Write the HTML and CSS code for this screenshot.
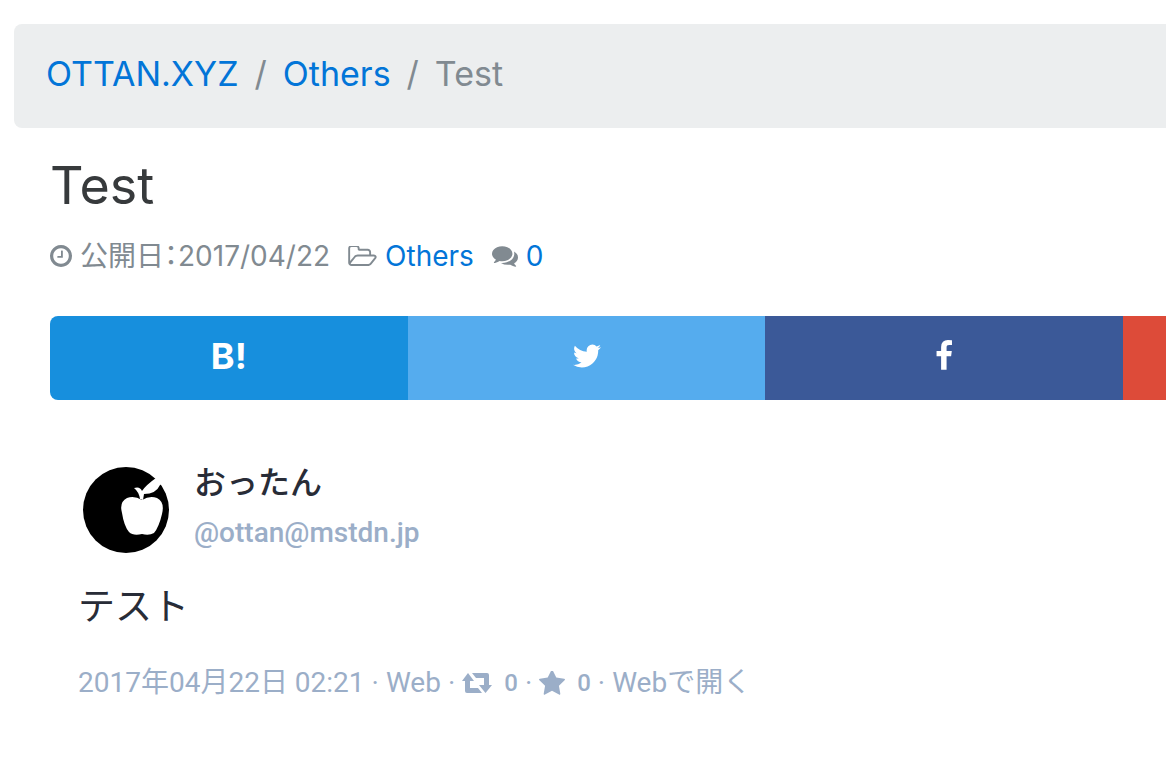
FILE: index.html
```html
<!DOCTYPE html>
<html lang="ja">
<head>
<meta charset="utf-8">
<meta name="viewport" content="width=device-width, initial-scale=1">
<title>Test | OTTAN.XYZ</title>
<link rel="stylesheet" href="styles.css">
</head>
<body>
<div class="page">
  <nav class="breadcrumb" aria-label="breadcrumb">
    <a href="#">OTTAN.XYZ</a>
    <span class="divider">/</span>
    <a href="#">Others</a>
    <span class="divider">/</span>
    <span>Test</span>
  </nav>

  <main class="article">
    <h1 class="title">Test</h1>
    <div class="meta">
      <span class="meta-item">
        <svg class="icon-clock" viewBox="128 128 1536 1536" aria-hidden="true"><path d="M1024 544v448q0 14-9 23t-23 9h-320q-14 0-23-9t-9-23v-64q0-14 9-23t23-9h224v-352q0-14 9-23t23-9h64q14 0 23 9t9 23zm416 352q0-148-73-273t-198-198-273-73-273 73-198 198-73 273 73 273 198 198 273 73 273-73 198-198 73-273zm224 0q0 209-103 385.5t-279.500 279.500-385.500 103-385.500-103-279.500-279.500-103-385.500 103-385.500 279.500-279.500 385.500-103 385.500 103 279.500 279.500 103 385.500z"/></svg>
        <span class="date">公開日：2017/04/22</span>
      </span>
      <span class="meta-item">
        <svg class="icon-folder" viewBox="64 192 1920 1344" aria-hidden="true"><path d="M1845 931q0-35-53-35h-1088q-40 0-85.500 21.500t-71.500 52.500l-294 363q-18 24-18 40 0 35 53 35h1088q40 0 86-22t71-53l294-363q18-22 18-39zm-1141-163h768v-160q0-40-28-68t-68-28h-576q-40 0-68-28t-28-68v-64q0-40-28-68t-68-28h-320q-40 0-68 28t-28 68v853l256-315q44-53 116-87.500t140-34.500zm1269 163q0 62-46 120l-295 363q-43 53-116 87.500t-140 34.500h-1088q-92 0-158-66t-66-158v-960q0-92 66-158t158-66h320q92 0 158 66t66 158v32h544q92 0 158 66t66 158v160h192q54 0 99 24.500t67 70.500q15 32 15 68z"/></svg>
        <a href="#">Others</a>
      </span>
      <span class="meta-item">
        <svg class="icon-comments" viewBox="0 256 1792 1408" aria-hidden="true"><path d="M1408 768q0 139-94 257t-256.500 186.500-353.500 68.500q-86 0-176-16-124 88-278 128-36 9-86 16h-3q-11 0-20.500-8t-11.500-21q-1-3-1-6.500t.5-6.500 2-6l2.500-5 3.500-5.500 4-5 4.500-5 4-4.500q5-6 23-25t26-29.500 22.500-29 25-38.500 20.500-44q-124-72-195-177t-71-224q0-139 94-257t256.500-186.500 353.500-68.500 353.500 68.500 256.500 186.500 94 257zm384 256q0 120-71 224.500t-195 176.500q10 24 20.500 44t25 38.500 22.500 29 26 29.500 23 25q1 1 4 4.500t4.500 5 4 5 3.500 5.500l2.500 5 2 6 .5 6.500-1 6.500q-3 14-13 22t-22 7q-50-7-86-16-154-40-278-128-90 16-176 16-271 0-472-132 58 4 88 4 161 0 309-45t264-129q125-92 192-212t67-254q0-77-23-152 129 71 204 178t75 230z"/></svg>
        <a href="#">0</a>
      </span>
    </div>

    <div class="share">
      <a class="share-link hatena" href="#">B!</a>
      <a class="share-link twitter" href="#" aria-label="Twitter"><svg class="icon-share" viewBox="0 0 1792 1792" aria-hidden="true"><path d="M1684 408q-67 98-162 167 1 14 1 42 0 130-38 259.500t-115.500 248.500-184.500 210.500-258 146-323 54.500q-271 0-496-145 35 4 78 4 225 0 401-138-105-2-188-64.500t-114-159.500q33 5 61 5 43 0 85-11-112-23-185.500-111.500t-73.500-205.500v-4q68 38 146 41-66-44-105-115t-39-154q0-88 44-163 121 149 294.500 238.500t371.500 99.500q-8-38-8-74 0-134 94.500-228.500t228.500-94.500q140 0 236 102 109-21 205-78-37 115-142 178 93-10 186-50z"/></svg></a>
      <a class="share-link facebook" href="#" aria-label="Facebook"><svg class="icon-share" viewBox="0 0 1792 1792" aria-hidden="true"><path d="M1343 12v264h-157q-86 0-116 36t-30 108v189h293l-39 296h-254v759h-306v-759h-255v-296h255v-218q0-186 104-288.500t277-102.500q147 0 228 12z"/></svg></a>
      <a class="share-link google" href="#" aria-label="Google+"></a>
    </div>

    <article class="toot">
      <header class="author">
        <svg class="avatar" viewBox="0 0 86 86" role="img" aria-label="おったん">
          <circle cx="43" cy="43" r="43"/>
          <path class="cutout" d="M59 33Q51 28 44 31Q36 35 39 46Q41 59 46 65Q50 69 59 67Q66 69 71 66Q76 60 79 47Q82 35 74 31Q67 28 59 33Z"/>
          <path class="cutout" d="M57 32Q56 25 51 21Q57 19 59 24Q63 18 73 11L80 16L77 18Q73 27 61 27L60 33Z"/>
        </svg>
        <div class="names">
          <strong class="name">おったん</strong>
          <span class="account">@ottan@mstdn.jp</span>
        </div>
      </header>
      <p class="content">テスト</p>
      <footer class="details">
        <a href="#">2017年04月22日 02:21</a>
        <span>·</span>
        <span>Web</span>
        <span>·</span>
        <a class="count" href="#"><svg class="icon-retweet" viewBox="0 0 30 20" aria-hidden="true"><path d="M6 0L12 8H8V15H16L20 20H5Q3 20 3 18V8H0ZM10 0H25Q27 0 27 2V12H30L23.500 20L17 12H22V5H14Z"/></svg><span class="number">0</span></a>
        <span>·</span>
        <a class="count" href="#"><svg class="icon-star" viewBox="64 128 1664 1492" aria-hidden="true"><path d="M1728 647q0 22-26 48l-363 354 86 500q1 7 1 20 0 21-10.500 35.500t-30.500 14.500q-19 0-40-12l-449-236-449 236q-22 12-40 12-21 0-31.500-14.500t-10.500-35.500q0-6 2-20l86-500-364-354q-25-27-25-48 0-37 56-46l502-73 225-455q19-41 49-41t49 41l225 455 502 73q56 9 56 46z"/></svg><span class="number">0</span></a>
        <span>·</span>
        <a href="#">Webで開く</a>
      </footer>
    </article>
  </main>
</div>
</body>
</html>
```

FILE: styles.css
```css
* { box-sizing: border-box; }

body {
  margin: 0;
  background: #fff;
  color: #373a3c;
  font-family: Inter, "Noto Sans CJK JP", sans-serif;
}

a { color: #0275d8; text-decoration: none; }
svg { display: block; fill: currentColor; flex: none; }

.page { padding: 24px 0 0 14px; overflow: hidden; }

.breadcrumb {
  display: flex;
  gap: 16px;
  padding: 26px 32px 30px;
  border-radius: 8px 0 0 8px;
  background: #eceeef;
  color: #818a91;
  font-size: 34px;
  line-height: 48px;
}

.article { padding: 28px 0 0 36px; }

.title {
  margin: 0;
  font-size: 52px;
  font-weight: 400;
  line-height: 60px;
}

.meta {
  display: flex;
  gap: 18px;
  margin-top: 20px;
  color: #818a91;
  font-size: 28px;
  line-height: 40px;
}

.meta-item { display: flex; align-items: center; gap: 8px; white-space: nowrap; }
.date { font-feature-settings: "palt"; }
.icon-clock { width: 22px; height: 22px; }
.icon-folder { width: 29px; height: 20px; }
.icon-comments { width: 26px; height: 21px; }

.share {
  display: grid;
  grid-template-columns: repeat(4, 32.05%);
  margin-top: 40px;
}

.share-link {
  display: flex;
  align-items: center;
  justify-content: center;
  height: 84px;
  padding-bottom: 4px;
  color: #fff;
  font-size: 36px;
  font-weight: 700;
}

.hatena { border-radius: 8px 0 0 8px; background: #178fdd; }
.twitter { background: #55acee; }
.facebook { background: #3b5998; }
.google { background: #dd4b39; }
.icon-share { width: 32px; height: 32px; }

.toot {
  padding: 60px 28px 48px;
  color: #282c37;
  font-family: Roboto, "Noto Sans CJK JP", sans-serif;
}

.author { display: flex; gap: 25px; padding-left: 5px; }
.avatar { width: 86px; height: 86px; margin-top: 7px; fill: #000; }
.cutout { fill: #fff; }
.names { display: flex; flex-direction: column; }

.name { font-size: 32px; font-weight: 500; line-height: 46px; }

.account {
  color: #9baec8;
  font-size: 28px;
  font-weight: 500;
  line-height: 54px;
}

.content { margin: 24px 0 0; font-size: 37px; line-height: 48px; }

.details {
  display: flex;
  align-items: center;
  gap: 7px;
  margin-top: 31px;
  color: #9baec8;
  font-size: 28px;
  line-height: 40px;
  white-space: nowrap;
}

.details a { color: inherit; }
.count { display: flex; align-items: center; gap: 12px; }
.number { font-size: 24px; font-weight: 500; }
.icon-retweet { width: 30px; height: 20px; }
.icon-star { width: 26px; height: 24px; }
```
